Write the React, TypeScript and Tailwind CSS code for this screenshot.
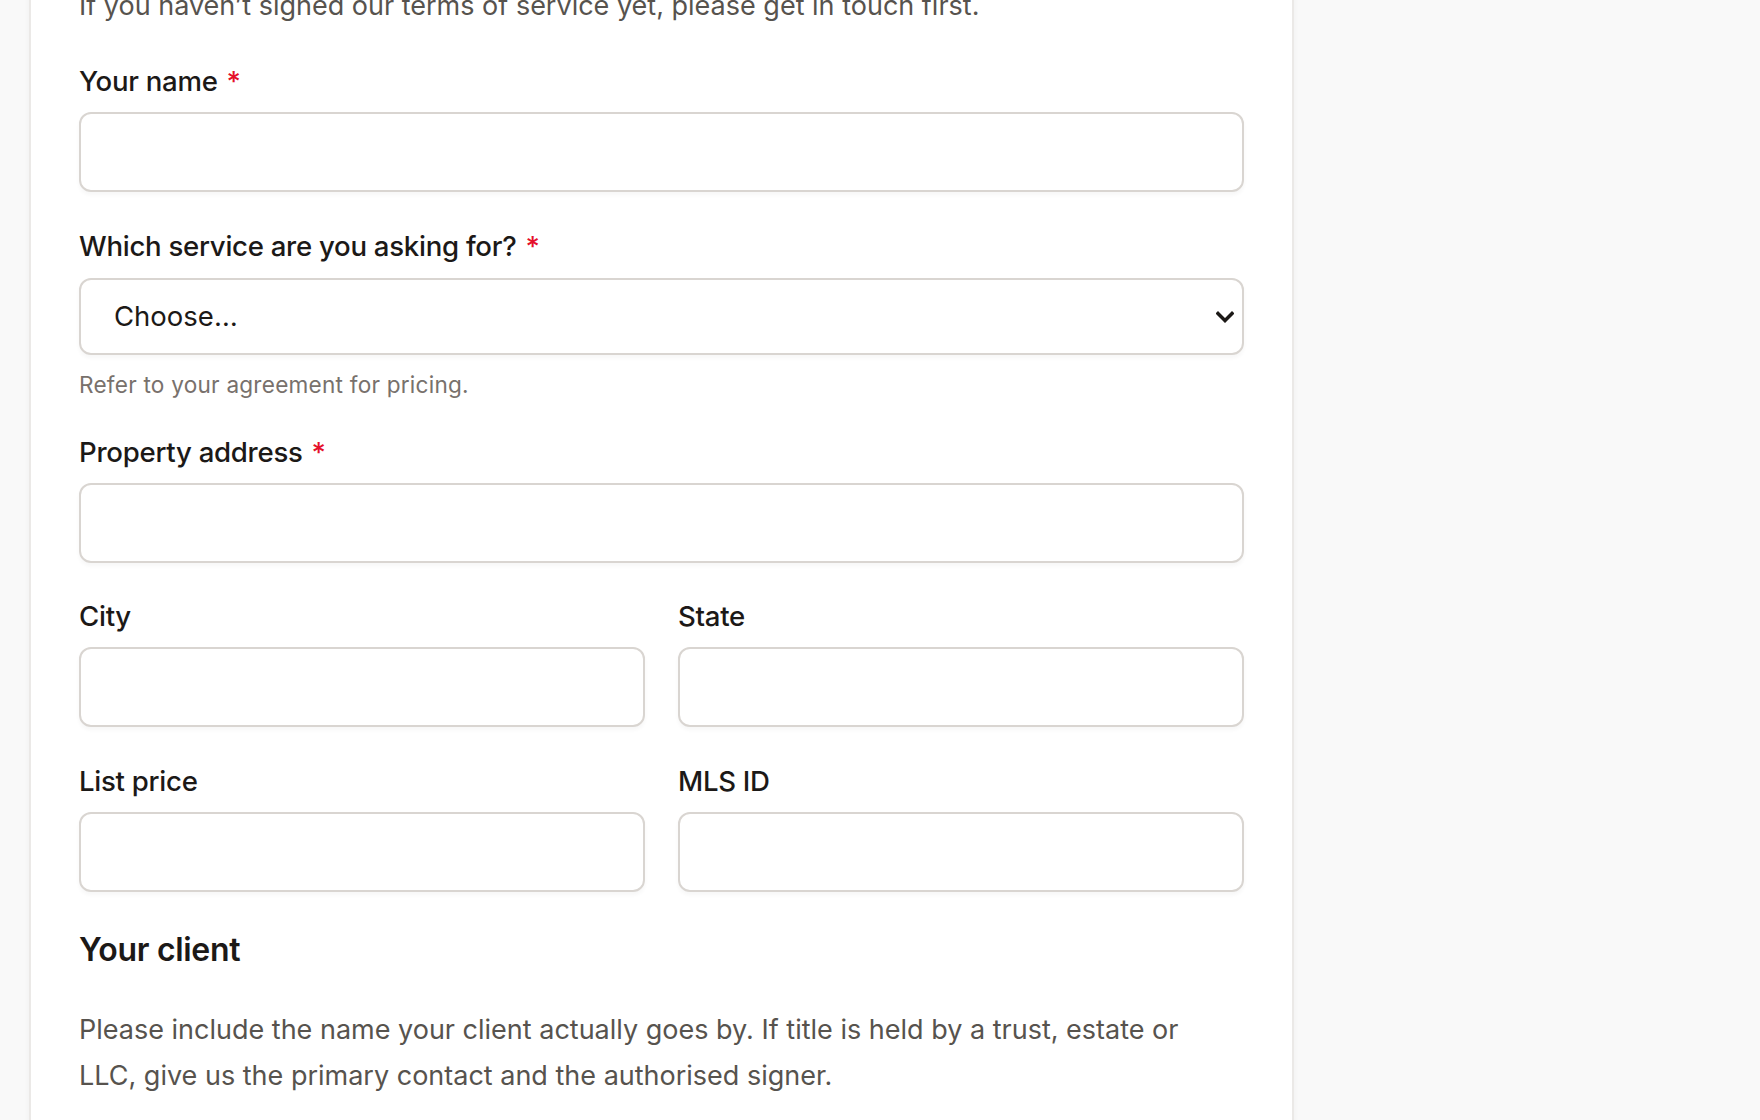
import React from "react";

const font = { fontFamily: "Inter, 'Noto Sans', 'Liberation Sans', sans-serif" };

function Label({ text, required }: { text: string; required?: boolean }) {
  return (
    <label className="block h-[36px] leading-[36px] text-[27.6px] font-medium text-[#1c1917] tracking-[-0.01em]">
      {text}
      {required && <span className="ml-[9px] text-[#e5102b]">*</span>}
    </label>
  );
}

function Input() {
  return (
    <input
      type="text"
      className="mt-[13px] block w-full h-[80px] rounded-[12px] border-2 border-[#d9d5d1] bg-white shadow-[0_3px_4px_rgba(0,0,0,0.035)] outline-none"
    />
  );
}

export default function App() {
  return (
    <div className="h-[1120px] w-full overflow-hidden bg-[#f9f9f9]" style={font}>
      <div className="ml-[29px] w-[1265px] h-[1160px] -mt-[20px] border-2 border-[#ebe9e7] bg-white shadow-[0_0_6px_rgba(0,0,0,0.04)] px-[48px]">
        <div className="pt-[1px]">
          <p className="h-[46px] leading-[46px] text-[27px] text-[#57534e] whitespace-nowrap">
            If you haven’t signed our terms of service yet, please get in touch first.
          </p>

          <div className="mt-[34px]">
            <Label text="Your name" required />
            <Input />
          </div>

          <div className="mt-[36px]">
            <Label text="Which service are you asking for?" required />
            <div className="relative mt-[14px]">
              <select
                defaultValue=""
                className="block w-full h-[77px] appearance-none rounded-[12px] border-2 border-[#d9d5d1] bg-white pl-[33px] pr-[48px] text-[27.5px] text-[#1c1917] shadow-[0_3px_4px_rgba(0,0,0,0.035)] outline-none"
                style={font}
              >
                <option value="">Choose…</option>
              </select>
              <svg
                className="pointer-events-none absolute right-[10px] top-1/2 -translate-y-1/2"
                width="18"
                height="12"
                viewBox="0 0 18 12"
                fill="none"
              >
                <path d="M2 2.5L9 9.5L16 2.5" stroke="#1c1917" strokeWidth="3.4" strokeLinecap="square" />
              </svg>
            </div>
            <p className="mt-[15px] h-[30px] leading-[30px] text-[22.6px] text-[#78716c] tracking-[0.01em]">
              Refer to your agreement for pricing.
            </p>
          </div>

          <div className="mt-[34px]">
            <Label text="Property address" required />
            <Input />
          </div>

          <div className="mt-[35px] grid grid-cols-2 gap-x-[33px]">
            <div>
              <Label text="City" />
              <Input />
            </div>
            <div>
              <Label text="State" />
              <Input />
            </div>
          </div>

          <div className="mt-[36px] grid grid-cols-2 gap-x-[33px]">
            <div>
              <Label text="List price" />
              <Input />
            </div>
            <div>
              <Label text="MLS ID" />
              <Input />
            </div>
          </div>

          <h2 className="mt-[38px] h-[40px] leading-[40px] text-[32px] font-semibold text-[#1c1917] tracking-[-0.01em]">
            Your client
          </h2>

          <p className="mt-[37px] leading-[46px] text-[27px] text-[#57534e] whitespace-nowrap">
            Please include the name your client actually goes by. If title is held by a trust, estate or
            <br />
            LLC, give us the primary contact and the authorised signer.
          </p>
        </div>
      </div>
    </div>
  );
}
